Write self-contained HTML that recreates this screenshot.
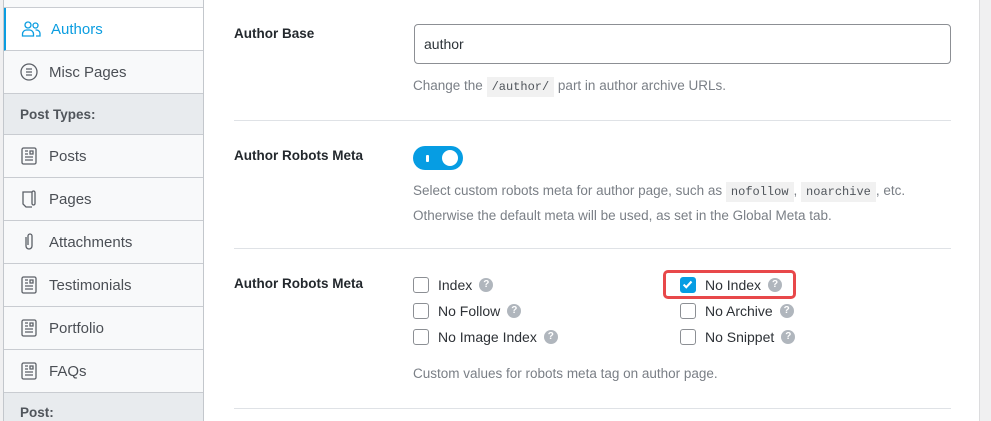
<!DOCTYPE html>
<html><head><meta charset="utf-8"><style>
*{box-sizing:border-box;margin:0;padding:0}
html,body{width:991px;height:421px;overflow:hidden}
body{background:#f0f0f1;font-family:"Liberation Sans",sans-serif;position:relative;color:#242628}
.side{position:absolute;left:3px;top:-1px;width:201px;height:422px;overflow:hidden;border-left:1px solid #c3c7cc;border-right:1px solid #c3c7cc}
.it{height:43px;border-bottom:1px solid #c9ccd1;background:#f8f9fa;display:flex;align-items:center;padding-left:15px;font-size:15px;color:#4b4f55}
.it svg{width:20px;height:20px;margin-right:10px;flex:none}
.act{background:#fff;color:#0b9de0;border-left:3px solid #0b9de0;margin-left:-1px;padding-left:15px}
.hd{height:41px;background:#e8ebee;border-bottom:1px solid #c9ccd1;display:flex;align-items:center;padding-left:16px;font-size:13.5px;font-weight:bold;color:#50555b}
.main{position:absolute;left:204px;top:0;width:776px;height:421px;background:#fff;border-right:1px solid #dcdcde}
.lbl{position:absolute;left:30px;font-size:13.5px;font-weight:bold;color:#23282d}
.sep{position:absolute;left:30px;width:717px;height:1px;background:#dfe2e6}
.desc{position:absolute;left:209px;font-size:13.5px;color:#7a7f86;line-height:23px}
code{font-family:"Liberation Mono",monospace;font-size:12px;background:#f1f1f1;padding:3px 5px;color:#50555b}
.cb{position:absolute;font-size:14px;color:#2d3136;display:flex;align-items:center;height:18px}
.box{width:16px;height:16px;border:1px solid #8c8f94;border-radius:3px;margin-right:9px;background:#fff}
.q{display:inline-block;width:14px;height:14px;border-radius:50%;background:#b0b6bd;color:#fff;font-size:10px;font-weight:bold;text-align:center;line-height:14px;margin-left:7px}
</style></head><body>
<div class="side">
<div class="it" style="height:9px;padding:0"></div>
<div class="it act"><svg viewBox="0 0 20 20" fill="none" stroke="#0b9de0" stroke-width="1.3"><circle cx="7" cy="6" r="3"/><path d="M1.5 17v-2a4 4 0 014-4h3a4 4 0 014 4v2z"/><circle cx="14.5" cy="6.5" r="2.5"/><path d="M14.5 11h1a3.5 3.5 0 013.5 3.5V17h-4"/></svg>Authors</div>
<div class="it"><svg viewBox="0 0 20 20" fill="none" stroke="#5c6067" stroke-width="1.3"><circle cx="10" cy="10" r="8"/><path d="M7 7h6M7 10h6M7 13h6"/></svg>Misc Pages</div>
<div class="hd">Post Types:</div>
<div class="it"><svg viewBox="0 0 20 20" fill="none" stroke="#5c6067" stroke-width="1.3"><rect x="3" y="2" width="14" height="16" rx="1.5"/><path d="M6 5h3M6 8h3M11 5h3v3h-3zM6 11h8M6 14h8"/></svg>Posts</div>
<div class="it"><svg viewBox="0 0 20 20" fill="none" stroke="#5c6067" stroke-width="1.3"><path d="M13 3H4v12l3 3h6"/><rect x="13" y="2" width="3" height="14" rx="1.5"/></svg>Pages</div>
<div class="it"><svg viewBox="0 0 20 20" fill="none" stroke="#5c6067" stroke-width="1.3"><path d="M7 5v9a3 3 0 006 0V4a2 2 0 00-4 0v9"/></svg>Attachments</div>
<div class="it"><svg viewBox="0 0 20 20" fill="none" stroke="#5c6067" stroke-width="1.3"><rect x="3" y="2" width="14" height="16" rx="1.5"/><path d="M6 5h3M6 8h3M11 5h3v3h-3zM6 11h8M6 14h8"/></svg>Testimonials</div>
<div class="it"><svg viewBox="0 0 20 20" fill="none" stroke="#5c6067" stroke-width="1.3"><rect x="3" y="2" width="14" height="16" rx="1.5"/><path d="M6 5h3M6 8h3M11 5h3v3h-3zM6 11h8M6 14h8"/></svg>Portfolio</div>
<div class="it"><svg viewBox="0 0 20 20" fill="none" stroke="#5c6067" stroke-width="1.3"><rect x="3" y="2" width="14" height="16" rx="1.5"/><path d="M6 5h3M6 8h3M11 5h3v3h-3zM6 11h8M6 14h8"/></svg>FAQs</div>
<div class="hd" style="height:40px;align-items:flex-start;padding-top:12px">Post:</div>
</div>
<div class="main">
<div class="lbl" style="top:26px">Author Base</div>
<div style="position:absolute;left:210px;top:24px;width:537px;height:40px;border:1px solid #8c8f94;border-radius:4px;font-size:14px;padding:11px 9px;color:#2c3338">author</div>
<div class="desc" style="top:74px">Change the <code>/author/</code> part in author archive URLs.</div>
<div class="sep" style="top:120px"></div>
<div class="lbl" style="top:148px">Author Robots Meta</div>
<div style="position:absolute;left:209px;top:146px;width:50px;height:24px;border-radius:12px;background:#069de3"><div style="position:absolute;left:13px;top:9px;width:3px;height:7px;background:#fff;border-radius:1px"></div><div style="position:absolute;left:29px;top:4px;width:16px;height:16px;border-radius:50%;background:#fff"></div></div>
<div class="desc" style="top:179px">Select custom robots meta for author page, such as <code>nofollow</code>, <code>noarchive</code>, etc.<br>Otherwise the default meta will be used, as set in the Global Meta tab.</div>
<div class="sep" style="top:248px"></div>
<div class="lbl" style="top:276px">Author Robots Meta</div>
<div class="cb" style="left:209px;top:276px"><span class="box"></span>Index<span class="q">?</span></div>
<div class="cb" style="left:209px;top:302px"><span class="box"></span>No Follow<span class="q">?</span></div>
<div class="cb" style="left:209px;top:328px"><span class="box"></span>No Image Index<span class="q">?</span></div>
<div style="position:absolute;left:459px;top:270px;width:133px;height:29px;border:3px solid #e8484a;border-radius:5px"></div>
<div class="cb" style="left:476px;top:276px"><span class="box" style="background:#069de3;border-color:#069de3;position:relative"><svg viewBox="0 0 16 16" style="position:absolute;left:0;top:0;width:14px;height:14px"><path d="M3 7.5l3 3 6-6.5" fill="none" stroke="#fff" stroke-width="2.4"/></svg></span>No Index<span class="q">?</span></div>
<div class="cb" style="left:476px;top:302px"><span class="box"></span>No Archive<span class="q">?</span></div>
<div class="cb" style="left:476px;top:328px"><span class="box"></span>No Snippet<span class="q">?</span></div>
<div class="desc" style="top:362px">Custom values for robots meta tag on author page.</div>
<div class="sep" style="top:408px"></div>
</div>
</body></html>
